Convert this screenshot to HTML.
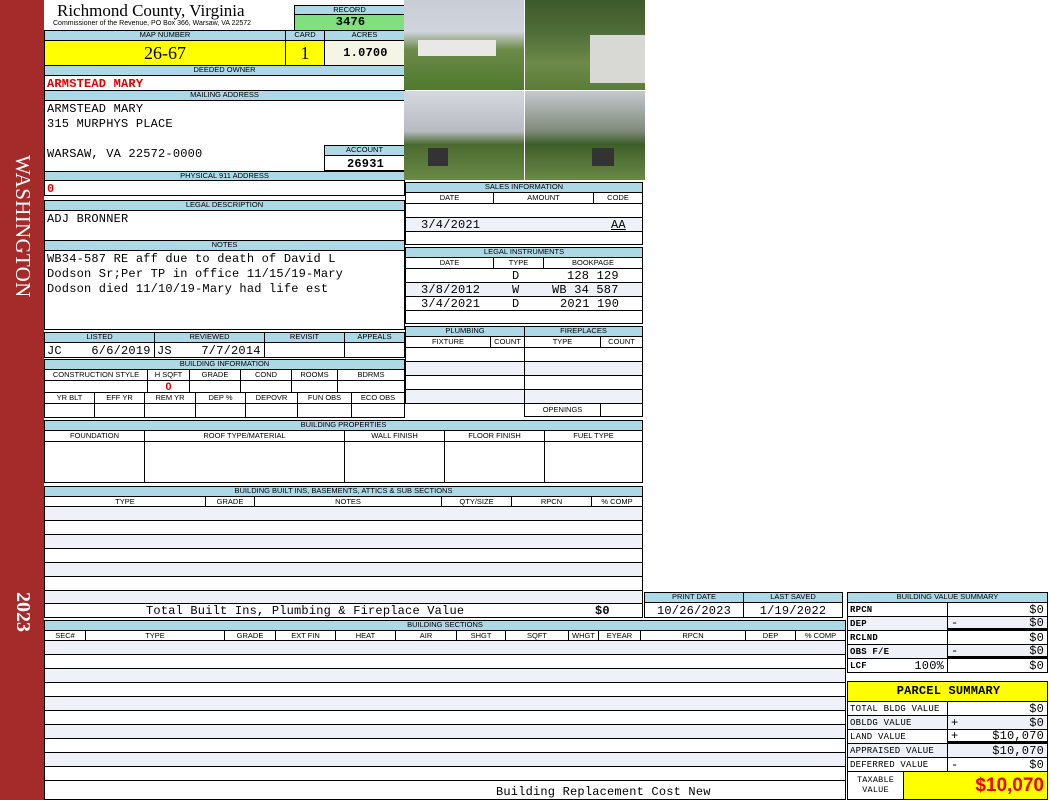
<!DOCTYPE html>
<html><head><meta charset="utf-8">
<style>
*{margin:0;padding:0;box-sizing:border-box}
body{width:1050px;height:800px;background:#fff;position:relative;overflow:hidden;font-family:"Liberation Sans",sans-serif}
.c{position:absolute;border:1px solid #000;background:#fff;overflow:hidden;white-space:nowrap}
.h{background:#add8e6;font-size:7.5px;text-align:center;line-height:8px;letter-spacing:0}
.s{font-size:7.5px;text-align:center;line-height:9px}
.m{font-family:"Liberation Mono",monospace;font-size:12px;line-height:14px;padding-left:2px;letter-spacing:0.2px}
.l{background:#eef2f8}
.t{position:absolute;white-space:nowrap}
.r{text-align:right;padding-right:3px}
</style></head><body>
<div style="position:absolute;left:0;top:0;width:44px;height:800px;background:#a52a2a"></div>
<div class="t" style="left:10px;top:155px;writing-mode:vertical-rl;color:#fff;font-family:'Liberation Serif',serif;font-size:21px;letter-spacing:0.3px">WASHINGTON</div>
<div class="t" style="left:11px;top:592px;writing-mode:vertical-rl;color:#fff;font-family:'Liberation Serif',serif;font-size:20px;font-weight:bold">2023</div>

<div class="t" style="left:57px;top:1px;font-family:'Liberation Serif',serif;font-size:17px">Richmond County, Virginia</div>
<div class="t" style="left:53px;top:20px;font-size:7px">Commissioner of the Revenue, PO Box 366, Warsaw, VA 22572</div>

<div class="c h" style="left:294px;top:5px;width:111px;height:10px">RECORD</div>
<div class="c m" style="left:294px;top:14px;width:111px;height:17px;background:#80e080;text-align:center;font-weight:bold">3476</div>

<div class="c h" style="left:44px;top:30px;width:242px;height:11px">MAP NUMBER</div>
<div class="c h" style="left:285px;top:30px;width:40px;height:11px">CARD</div>
<div class="c h" style="left:324px;top:30px;width:81px;height:11px">ACRES</div>
<div class="c" style="left:44px;top:40px;width:242px;height:26px;background:#ff0;font-family:'Liberation Serif',serif;font-size:18px;text-align:center;line-height:24px">26-67</div>
<div class="c" style="left:285px;top:40px;width:40px;height:26px;background:#ff0;font-family:'Liberation Serif',serif;font-size:18px;text-align:center;line-height:24px">1</div>
<div class="c m" style="left:324px;top:40px;width:81px;height:26px;background:#f5f5e6;text-align:center;line-height:24px;font-weight:bold">1.0700</div>

<div class="c h" style="left:44px;top:65px;width:361px;height:11px">DEEDED OWNER</div>
<div class="c m" style="left:44px;top:75px;width:361px;height:16px;color:#d00;font-weight:bold;padding-top:1px">ARMSTEAD MARY</div>
<div class="c h" style="left:44px;top:90px;width:361px;height:11px">MAILING ADDRESS</div>
<div class="c m" style="left:44px;top:100px;width:361px;height:72px;line-height:15px;padding-top:1px">ARMSTEAD MARY<br>315 MURPHYS PLACE<br><br>WARSAW, VA 22572-0000</div>
<div class="c h" style="left:324px;top:145px;width:81px;height:11px">ACCOUNT</div>
<div class="c m" style="left:324px;top:155px;width:81px;height:16px;text-align:center;font-weight:bold;padding-top:1px">26931</div>
<div class="c h" style="left:44px;top:171px;width:361px;height:10px">PHYSICAL 911 ADDRESS</div>
<div class="c m" style="left:44px;top:180px;width:361px;height:16px;color:#d00;font-weight:bold;padding-top:1px">0</div>

<!-- photos -->
<div style="position:absolute;left:404px;top:0;width:120px;height:90px;background:linear-gradient(#c8ccd4 0%,#d0d4dc 35%,#6b8a48 55%,#4f7a2e 100%)"></div>
<div style="position:absolute;left:418px;top:40px;width:78px;height:16px;background:#e8e8e6"></div>
<div style="position:absolute;left:525px;top:0;width:120px;height:90px;background:linear-gradient(#3d5a2a 0%,#52703a 40%,#6d8a4a 70%,#5b7d36 100%)"></div>
<div style="position:absolute;left:590px;top:35px;width:55px;height:48px;background:#d8d8d4"></div>
<div style="position:absolute;left:404px;top:91px;width:120px;height:89px;background:linear-gradient(#d5d8de 0%,#b8bcc2 45%,#4a6a30 60%,#6a8a48 100%)"></div>
<div style="position:absolute;left:428px;top:148px;width:20px;height:18px;background:#333"></div>
<div style="position:absolute;left:525px;top:91px;width:120px;height:89px;background:linear-gradient(#c5c9cf 0%,#7e8a78 45%,#3e5e28 60%,#6a8a48 100%)"></div>
<div style="position:absolute;left:592px;top:148px;width:22px;height:18px;background:#333"></div>

<div class="c h" style="left:44px;top:200px;width:361px;height:11px">LEGAL DESCRIPTION</div>
<div class="c m" style="left:44px;top:210px;width:361px;height:31px;padding-top:1px">ADJ BRONNER</div>
<div class="c h" style="left:44px;top:240px;width:361px;height:11px">NOTES</div>
<div class="c m" style="left:44px;top:250px;width:361px;height:80px;line-height:15px;padding-top:1px">WB34-587 RE aff due to death of David L<br>Dodson Sr;Per TP in office 11/15/19-Mary<br>Dodson died 11/10/19-Mary had life est</div>

<div class="c h" style="left:44px;top:332px;width:111px;height:11px">LISTED</div>
<div class="c h" style="left:154px;top:332px;width:111px;height:11px">REVIEWED</div>
<div class="c h" style="left:264px;top:332px;width:81px;height:11px">REVISIT</div>
<div class="c h" style="left:344px;top:332px;width:61px;height:11px">APPEALS</div>
<div class="c m" style="left:44px;top:342px;width:111px;height:16px;padding-top:1px">JC&nbsp;&nbsp;&nbsp;&nbsp;6/6/2019</div>
<div class="c m" style="left:154px;top:342px;width:111px;height:16px;padding-top:1px">JS&nbsp;&nbsp;&nbsp;&nbsp;7/7/2014</div>
<div class="c" style="left:264px;top:342px;width:81px;height:16px"></div>
<div class="c" style="left:344px;top:342px;width:61px;height:16px"></div>

<div class="c h" style="left:44px;top:359px;width:361px;height:11px">BUILDING INFORMATION</div>
<div class="c s" style="left:44px;top:369px;width:104px;height:12px">CONSTRUCTION STYLE</div>
<div class="c s" style="left:147px;top:369px;width:43px;height:12px">H SQFT</div>
<div class="c s" style="left:189px;top:369px;width:52px;height:12px">GRADE</div>
<div class="c s" style="left:240px;top:369px;width:52px;height:12px">COND</div>
<div class="c s" style="left:291px;top:369px;width:47px;height:12px">ROOMS</div>
<div class="c s" style="left:337px;top:369px;width:68px;height:12px">BDRMS</div>
<div class="c" style="left:44px;top:380px;width:104px;height:13px"></div>
<div class="c" style="left:147px;top:380px;width:43px;height:13px;color:#d00;font-weight:bold;font-size:11px;text-align:center;line-height:12px">0</div>
<div class="c" style="left:189px;top:380px;width:52px;height:13px"></div>
<div class="c" style="left:240px;top:380px;width:52px;height:13px"></div>
<div class="c" style="left:291px;top:380px;width:47px;height:13px"></div>
<div class="c" style="left:337px;top:380px;width:68px;height:13px"></div>
<div class="c s" style="left:44px;top:392px;width:51px;height:12px">YR BLT</div>
<div class="c s" style="left:94px;top:392px;width:51px;height:12px">EFF YR</div>
<div class="c s" style="left:144px;top:392px;width:52px;height:12px">REM YR</div>
<div class="c s" style="left:195px;top:392px;width:51px;height:12px">DEP %</div>
<div class="c s" style="left:245px;top:392px;width:53px;height:12px">DEPOVR</div>
<div class="c s" style="left:297px;top:392px;width:55px;height:12px">FUN OBS</div>
<div class="c s" style="left:351px;top:392px;width:54px;height:12px">ECO OBS</div>
<div class="c" style="left:44px;top:403px;width:51px;height:15px"></div>
<div class="c" style="left:94px;top:403px;width:51px;height:15px"></div>
<div class="c" style="left:144px;top:403px;width:52px;height:15px"></div>
<div class="c" style="left:195px;top:403px;width:51px;height:15px"></div>
<div class="c" style="left:245px;top:403px;width:53px;height:15px"></div>
<div class="c" style="left:297px;top:403px;width:55px;height:15px"></div>
<div class="c" style="left:351px;top:403px;width:54px;height:15px"></div>

<!-- sales -->
<div class="c h" style="left:405px;top:182px;width:238px;height:11px">SALES INFORMATION</div>
<div class="c s" style="left:405px;top:192px;width:89px;height:12px">DATE</div>
<div class="c s" style="left:493px;top:192px;width:101px;height:12px">AMOUNT</div>
<div class="c s" style="left:593px;top:192px;width:50px;height:12px">CODE</div>
<div class="c" style="left:405px;top:203px;width:238px;height:15px"></div>
<div class="c m l" style="left:405px;top:217px;width:238px;height:15px;padding-left:15px">3/4/2021<span style="position:absolute;left:205px;text-decoration:underline">AA</span></div>
<div class="c" style="left:405px;top:231px;width:238px;height:14px"></div>

<div class="c h" style="left:405px;top:247px;width:238px;height:11px">LEGAL INSTRUMENTS</div>
<div class="c s" style="left:405px;top:257px;width:89px;height:12px">DATE</div>
<div class="c s" style="left:493px;top:257px;width:51px;height:12px">TYPE</div>
<div class="c s" style="left:543px;top:257px;width:100px;height:12px">BOOKPAGE</div>
<div class="c m" style="left:405px;top:268px;width:238px;height:15px"><span style="position:absolute;left:106px">D</span><span style="position:absolute;left:161px">128 129</span></div>
<div class="c m l" style="left:405px;top:282px;width:238px;height:15px;padding-left:15px">3/8/2012<span style="position:absolute;left:106px">W</span><span style="position:absolute;left:146px">WB 34 587</span></div>
<div class="c m" style="left:405px;top:296px;width:238px;height:15px;padding-left:15px">3/4/2021<span style="position:absolute;left:106px">D</span><span style="position:absolute;left:154px">2021 190</span></div>
<div class="c" style="left:405px;top:310px;width:238px;height:14px"></div>

<div class="c h" style="left:405px;top:326px;width:120px;height:11px">PLUMBING</div>
<div class="c h" style="left:524px;top:326px;width:119px;height:11px">FIREPLACES</div>
<div class="c s" style="left:405px;top:336px;width:86px;height:12px">FIXTURE</div>
<div class="c s" style="left:490px;top:336px;width:35px;height:12px">COUNT</div>
<div class="c s" style="left:524px;top:336px;width:77px;height:12px">TYPE</div>
<div class="c s" style="left:600px;top:336px;width:43px;height:12px">COUNT</div>
<div class="c" style="left:405px;top:347px;width:120px;height:15px"></div>
<div class="c l" style="left:405px;top:361px;width:120px;height:15px"></div>
<div class="c" style="left:405px;top:375px;width:120px;height:15px"></div>
<div class="c l" style="left:405px;top:389px;width:120px;height:15px"></div>
<div class="c" style="left:524px;top:347px;width:119px;height:15px"></div>
<div class="c l" style="left:524px;top:361px;width:119px;height:15px"></div>
<div class="c" style="left:524px;top:375px;width:119px;height:15px"></div>
<div class="c l" style="left:524px;top:389px;width:119px;height:15px"></div>
<div class="c s" style="left:524px;top:403px;width:77px;height:14px;line-height:12px">OPENINGS</div>
<div class="c" style="left:600px;top:403px;width:43px;height:14px"></div>

<!-- building properties -->
<div class="c h" style="left:44px;top:420px;width:599px;height:11px">BUILDING PROPERTIES</div>
<div class="c s" style="left:44px;top:430px;width:101px;height:12px">FOUNDATION</div>
<div class="c s" style="left:144px;top:430px;width:201px;height:12px">ROOF TYPE/MATERIAL</div>
<div class="c s" style="left:344px;top:430px;width:101px;height:12px">WALL FINISH</div>
<div class="c s" style="left:444px;top:430px;width:101px;height:12px">FLOOR FINISH</div>
<div class="c s" style="left:544px;top:430px;width:99px;height:12px">FUEL TYPE</div>
<div class="c" style="left:44px;top:441px;width:101px;height:42px"></div>
<div class="c" style="left:144px;top:441px;width:201px;height:42px"></div>
<div class="c" style="left:344px;top:441px;width:101px;height:42px"></div>
<div class="c" style="left:444px;top:441px;width:101px;height:42px"></div>
<div class="c" style="left:544px;top:441px;width:99px;height:42px"></div>

<!-- built ins -->
<div class="c h" style="left:44px;top:486px;width:599px;height:11px">BUILDING BUILT INS, BASEMENTS, ATTICS &amp; SUB SECTIONS</div>
<div class="c s" style="left:44px;top:496px;width:162px;height:11px;line-height:9px">TYPE</div>
<div class="c s" style="left:205px;top:496px;width:50px;height:11px;line-height:9px">GRADE</div>
<div class="c s" style="left:254px;top:496px;width:188px;height:11px;line-height:9px">NOTES</div>
<div class="c s" style="left:441px;top:496px;width:71px;height:11px;line-height:9px">QTY/SIZE</div>
<div class="c s" style="left:511px;top:496px;width:81px;height:11px;line-height:9px">RPCN</div>
<div class="c s" style="left:591px;top:496px;width:52px;height:11px;line-height:9px">% COMP</div>
<div class="c l" style="left:44px;top:506px;width:599px;height:15px"></div>
<div class="c" style="left:44px;top:520px;width:599px;height:15px"></div>
<div class="c l" style="left:44px;top:534px;width:599px;height:15px"></div>
<div class="c" style="left:44px;top:548px;width:599px;height:15px"></div>
<div class="c l" style="left:44px;top:562px;width:599px;height:15px"></div>
<div class="c" style="left:44px;top:576px;width:599px;height:15px"></div>
<div class="c l" style="left:44px;top:590px;width:599px;height:14px"></div>
<div class="c m" style="left:44px;top:603px;width:599px;height:15px;line-height:15px"><span style="position:absolute;left:101px">Total Built Ins, Plumbing &amp; Fireplace Value</span><span style="position:absolute;left:550px;font-weight:bold">$0</span></div>

<div class="c h" style="left:644px;top:592px;width:100px;height:11px">PRINT DATE</div>
<div class="c h" style="left:743px;top:592px;width:100px;height:11px">LAST SAVED</div>
<div class="c m" style="left:644px;top:602px;width:100px;height:16px;text-align:center;padding:1px 0 0">10/26/2023</div>
<div class="c m" style="left:743px;top:602px;width:100px;height:16px;text-align:center;padding:1px 0 0">1/19/2022</div>

<!-- building sections -->
<div class="c h" style="left:44px;top:620px;width:802px;height:11px">BUILDING SECTIONS</div>
<div class="c s" style="left:44px;top:630px;width:42px;height:11px;line-height:9px">SEC#</div>
<div class="c s" style="left:85px;top:630px;width:140px;height:11px;line-height:9px">TYPE</div>
<div class="c s" style="left:224px;top:630px;width:52px;height:11px;line-height:9px">GRADE</div>
<div class="c s" style="left:275px;top:630px;width:61px;height:11px;line-height:9px">EXT FIN</div>
<div class="c s" style="left:335px;top:630px;width:61px;height:11px;line-height:9px">HEAT</div>
<div class="c s" style="left:395px;top:630px;width:62px;height:11px;line-height:9px">AIR</div>
<div class="c s" style="left:456px;top:630px;width:50px;height:11px;line-height:9px">SHGT</div>
<div class="c s" style="left:505px;top:630px;width:64px;height:11px;line-height:9px">SQFT</div>
<div class="c s" style="left:568px;top:630px;width:31px;height:11px;line-height:9px">WHGT</div>
<div class="c s" style="left:598px;top:630px;width:43px;height:11px;line-height:9px">EYEAR</div>
<div class="c s" style="left:640px;top:630px;width:106px;height:11px;line-height:9px">RPCN</div>
<div class="c s" style="left:745px;top:630px;width:51px;height:11px;line-height:9px">DEP</div>
<div class="c s" style="left:795px;top:630px;width:51px;height:11px;line-height:9px">% COMP</div>
<div class="c l" style="left:44px;top:640px;width:802px;height:15px"></div>
<div class="c" style="left:44px;top:654px;width:802px;height:15px"></div>
<div class="c l" style="left:44px;top:668px;width:802px;height:15px"></div>
<div class="c" style="left:44px;top:682px;width:802px;height:15px"></div>
<div class="c l" style="left:44px;top:696px;width:802px;height:15px"></div>
<div class="c" style="left:44px;top:710px;width:802px;height:15px"></div>
<div class="c l" style="left:44px;top:724px;width:802px;height:15px"></div>
<div class="c" style="left:44px;top:738px;width:802px;height:15px"></div>
<div class="c l" style="left:44px;top:752px;width:802px;height:15px"></div>
<div class="c" style="left:44px;top:766px;width:802px;height:15px"></div>
<div class="c m" style="left:44px;top:780px;width:802px;height:20px;line-height:22px"><span style="position:absolute;left:451px">Building Replacement Cost New</span></div>

<!-- value summary -->
<div class="c h" style="left:847px;top:592px;width:201px;height:11px">BUILDING VALUE SUMMARY</div>
<div class="c m" style="left:847px;top:602px;width:101px;height:15px;font-size:9px;font-weight:bold">RPCN</div>
<div class="c m r" style="left:947px;top:602px;width:101px;height:15px">$0</div>
<div class="c m l" style="left:847px;top:616px;width:101px;height:15px;font-size:9px;font-weight:bold">DEP</div>
<div class="c m r l" style="left:947px;top:616px;width:101px;height:15px;border-bottom:3px solid #000;line-height:12px">$0<span style="position:absolute;left:3px">-</span></div>
<div class="c m" style="left:847px;top:630px;width:101px;height:15px;font-size:9px;font-weight:bold">RCLND</div>
<div class="c m r" style="left:947px;top:630px;width:101px;height:15px">$0</div>
<div class="c m l" style="left:847px;top:644px;width:101px;height:15px;font-size:9px;font-weight:bold">OBS F/E</div>
<div class="c m r l" style="left:947px;top:644px;width:101px;height:15px;border-bottom:3px solid #000;line-height:12px">$0<span style="position:absolute;left:3px">-</span></div>
<div class="c m" style="left:847px;top:658px;width:101px;height:15px;font-size:9px;font-weight:bold">LCF<span style="position:absolute;right:3px;font-size:12px;font-weight:normal">100%</span></div>
<div class="c m r" style="left:947px;top:658px;width:101px;height:15px">$0</div>

<div class="c m" style="left:847px;top:681px;width:201px;height:21px;background:#ff0;text-align:center;font-weight:bold;font-size:12px;line-height:19px">PARCEL SUMMARY</div>
<div class="c m" style="left:847px;top:701px;width:101px;height:15px;font-size:9px">TOTAL BLDG VALUE</div>
<div class="c m r" style="left:947px;top:701px;width:101px;height:15px">$0</div>
<div class="c m l" style="left:847px;top:715px;width:101px;height:15px;font-size:9px">OBLDG VALUE</div>
<div class="c m r l" style="left:947px;top:715px;width:101px;height:15px">$0<span style="position:absolute;left:3px">+</span></div>
<div class="c m" style="left:847px;top:729px;width:101px;height:15px;font-size:9px">LAND VALUE</div>
<div class="c m r" style="left:947px;top:729px;width:101px;height:15px;border-bottom:3px solid #000;line-height:12px">$10,070<span style="position:absolute;left:3px">+</span></div>
<div class="c m l" style="left:847px;top:743px;width:101px;height:15px;font-size:9px">APPRAISED VALUE</div>
<div class="c m r l" style="left:947px;top:743px;width:101px;height:15px">$10,070</div>
<div class="c m" style="left:847px;top:757px;width:101px;height:15px;font-size:9px">DEFERRED VALUE</div>
<div class="c m r" style="left:947px;top:757px;width:101px;height:15px">$0<span style="position:absolute;left:3px">-</span></div>
<div class="c m" style="left:847px;top:771px;width:57px;height:29px;font-size:8.5px;line-height:10px;text-align:center;padding:3px 0 0">TAXABLE<br>VALUE</div>
<div class="c" style="left:903px;top:771px;width:145px;height:29px;background:#ff0;color:#e00;font-weight:bold;font-size:19px;text-align:right;padding-right:3px;line-height:27px">$10,070</div>
</body></html>
